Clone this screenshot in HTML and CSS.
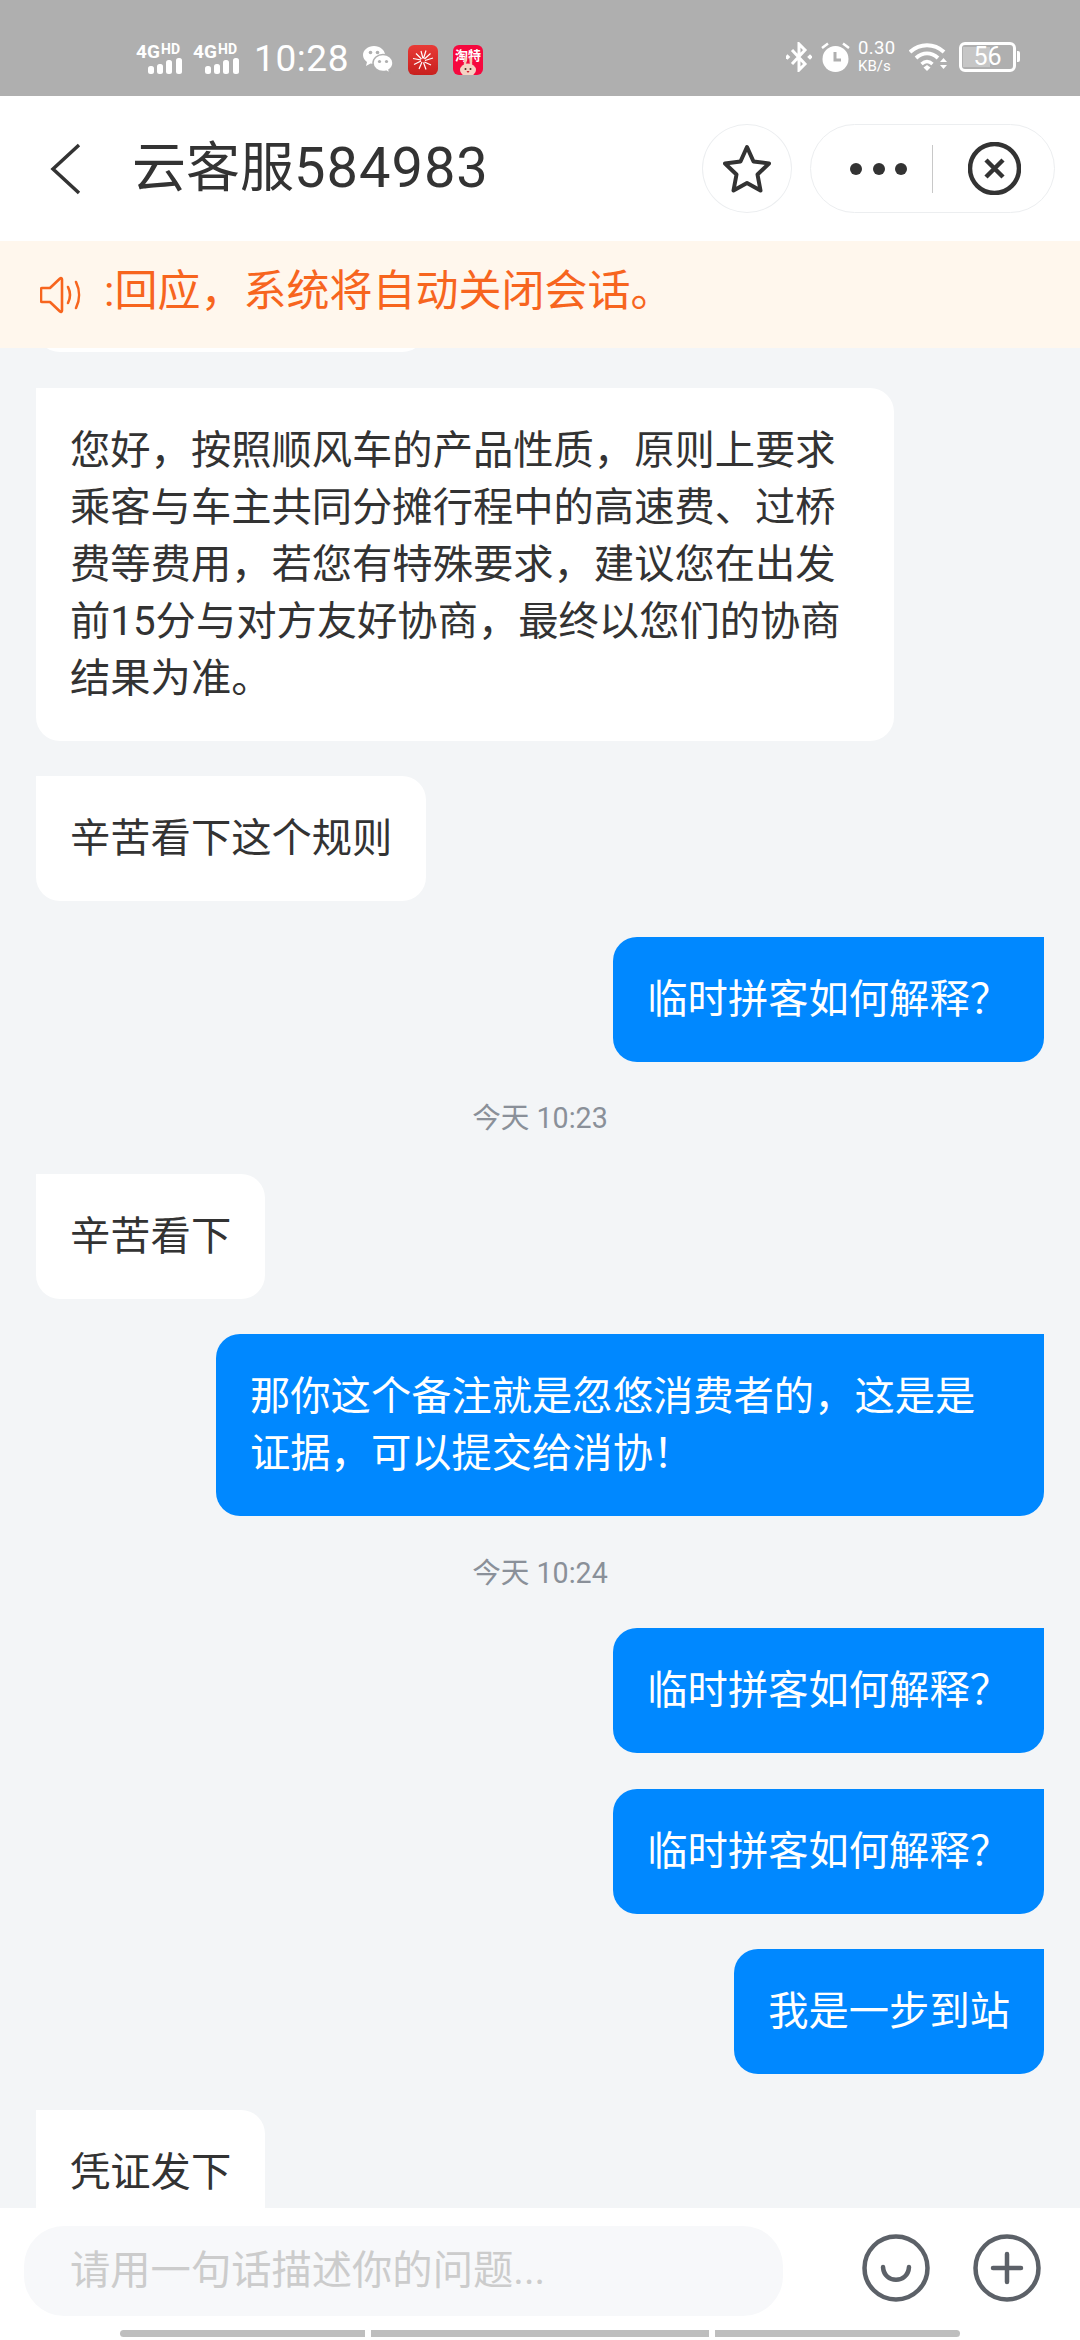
FILE: index.html
```html
<!DOCTYPE html>
<html lang="zh-CN">
<head>
<meta charset="utf-8">
<title>云客服584983</title>
<link rel="stylesheet" href="styles.css">
</head>
<body>
<div class="app">
  <div class="status">
    <svg class="sig" viewBox="0 -6 47 36"><text x="0" y="14" class="sig-g">4G</text><text x="25" y="10" class="sig-h">HD</text><rect x="12" y="22" width="6" height="8" rx="2.500"/><rect x="21" y="20" width="6" height="10" rx="2.500"/><rect x="30" y="16" width="6" height="14" rx="2.500"/><rect x="40" y="14" width="6" height="16" rx="2.500"/></svg>
    <svg class="sig sig2" viewBox="0 -6 47 36"><text x="0" y="14" class="sig-g">4G</text><text x="25" y="10" class="sig-h">HD</text><rect x="12" y="22" width="6" height="8" rx="2.500"/><rect x="21" y="20" width="6" height="10" rx="2.500"/><rect x="30" y="16" width="6" height="14" rx="2.500"/><rect x="40" y="14" width="6" height="16" rx="2.500"/></svg>
    <span class="clock">10:28</span>
    <svg class="ico wechat" viewBox="0 0 30 30"><path d="M11 1C5 1 0 5 0 10c0 3 1.600 5.300 4 7l-1 4 4.500-2.500c1 .3 2.300.5 3.500.5 C18 19 22 14 22 10 22 5 17 1 11 1z" fill="#fff"/><circle cx="7.500" cy="7.500" r="1.800" fill="#afafaf"/><circle cx="14.500" cy="7.500" r="1.800" fill="#afafaf"/><path d="M20 9.500c-5.500 0-10 3.800-10 8.500s4.500 8.500 10 8.500c1 0 2-.1 3-.4l4 2.400-1-3.600c2.500-1.600 4-4 4-6.900 0-4.700-4.500-8.500-10-8.500z" fill="#fff" stroke="#afafaf" stroke-width="1.500"/><circle cx="16.500" cy="16.500" r="1.600" fill="#afafaf"/><circle cx="23.500" cy="16.500" r="1.600" fill="#afafaf"/></svg>
    <svg class="ico app-red" viewBox="0 0 30 30"><defs><linearGradient id="rg" x1="0" y1="0" x2="0" y2="1"><stop offset="0" stop-color="#e83a36"/><stop offset="1" stop-color="#c8201e"/></linearGradient></defs><rect width="30" height="30" rx="6" fill="url(#rg)"/><path d="M15 13.500L13 6M15.500 13.500L18 5.500M16.500 14L22.500 8.500M17 15.500L25 13M16.500 17L23 20M15.500 17.500L18 24.500M14 17L11 24M13 16L6 19.500M13 15L5 13.500M13.500 14L8 8.500" stroke="#fff" stroke-width="1.200" fill="none"/></svg>
    <svg class="ico app-tao" viewBox="0 0 30 30"><rect width="30" height="30" rx="6" fill="#f6083e"/><text x="2" y="15" class="tao-t">淘特</text><path d="M12.500 13l-.5 6M17.500 13l.5 6" stroke="#f2c4b4" stroke-width="2.500" stroke-linecap="round"/><ellipse cx="15" cy="25" rx="8" ry="6.500" fill="#f4d3c4"/><circle cx="12.500" cy="24" r="1" fill="#432"/><circle cx="17.500" cy="24" r="1" fill="#432"/><path d="M13.500 26h3l-1.500 2z" fill="#c81e2e"/></svg>
    <div class="status-right">
      <svg class="ico bt" viewBox="0 0 26 30"><path d="M6 8l13 14-6 6V2l6 6L6 22" fill="none" stroke="#fff" stroke-width="3"/><rect x="-.5" y="13" width="4" height="4" transform="rotate(45 1.500 15)" fill="#fff"/><rect x="22" y="13" width="4" height="4" transform="rotate(45 24 15)" fill="#fff"/></svg>
      <svg class="ico alarm" viewBox="0 0 29 30"><circle cx="14.500" cy="17" r="13" fill="#fff"/><path d="M14 10v8h6" fill="none" stroke="#afafaf" stroke-width="3"/><path d="M1 6l6-4.500M28 6l-6-4.500" stroke="#fff" stroke-width="2.500"/></svg>
      <div class="speed"><span class="speed-num">0.30</span><span class="speed-unit">KB/s</span></div>
      <svg class="ico wifi" viewBox="0 0 39 30"><path d="M1 10C11 1 25 1 35 10" fill="none" stroke="#fff" stroke-width="4"/><path d="M7 16c7-6 15-6 22 0" fill="none" stroke="#fff" stroke-width="4"/><path d="M12.500 22c4-3.500 7-3.500 11 0" fill="none" stroke="#fff" stroke-width="3.500"/><path d="M14.500 25.500l3.500-2.500 3.500 2.500-3.500 3.500z" fill="#fff"/><path d="M31 20l3.500-4 3.500 4zM31 23h7l-3.500 4z" fill="#fff"/></svg>
      <div class="battery"><div class="battery-fill"></div><span class="battery-num">56</span></div>
      <div class="battery-nub"></div>
    </div>
  </div>

  <header class="head">
    <svg class="back" viewBox="0 0 31 52"><path d="M29 2L3 26l26 24" fill="none" stroke="#333" stroke-width="3.500"/></svg>
    <h1 class="title">云客服<span class="title-num">584983</span></h1>
    <div class="round-btn">
      <svg class="star" viewBox="0 0 48 50"><path d="M24 3l6.500 14.500 15.500 2-11.500 11 3 16L24 39l-13.500 7.500 3-16L2 19.500l15.500-2z" fill="none" stroke="#333" stroke-width="4" stroke-linejoin="round"/></svg>
    </div>
    <div class="capsule">
      <div class="dots"><span class="dot"></span><span class="dot"></span><span class="dot"></span></div>
      <div class="cap-sep"></div>
      <svg class="close" viewBox="0 0 53 53"><circle cx="26.500" cy="26.500" r="24.500" fill="none" stroke="#333" stroke-width="4.500"/><path d="M18 18l17 17M35 18L18 35" stroke="#333" stroke-width="4.500"/></svg>
    </div>
  </header>

  <div class="notice">
    <svg class="horn" viewBox="0 0 42 38"><path d="M2 12h8L20 2.500c1-.8 2-.3 2 1v31c0 1.300-1 1.800-2 1L10 26H2c-.6 0-1-.4-1-1V13c0-.6.4-1 1-1z" fill="none" stroke="#f7651e" stroke-width="2.600" stroke-linejoin="round"/><path d="M28 11c2.500 5 2.500 11 0 16M36 6c4 8 4 18 0 26" fill="none" stroke="#f7651e" stroke-width="2.600" stroke-linecap="round"/></svg>
    <div class="notice-text">:回应，系统将自动关闭会话。</div>
  </div>

  <main class="chat">
    <div class="bubble them stub"></div>
    <div class="bubble them">您好，按照顺风车的产品性质，原则上要求乘客与车主共同分摊行程中的高速费、过桥费等费用，若您有特殊要求，建议您在出发前15分与对方友好协商，最终以您们的协商结果为准。</div>
    <div class="bubble them">辛苦看下这个规则</div>
    <div class="bubble me">临时拼客如何解释<span class="fw">？</span></div>
    <div class="stamp">今天 10:23</div>
    <div class="bubble them">辛苦看下</div>
    <div class="bubble me">那你这个备注就是忽悠消费者的，这是是证据，可以提交给消协<span class="fw">！</span></div>
    <div class="stamp">今天 10:24</div>
    <div class="bubble me">临时拼客如何解释<span class="fw">？</span></div>
    <div class="bubble me">临时拼客如何解释<span class="fw">？</span></div>
    <div class="bubble me">我是一步到站</div>
    <div class="bubble them">凭证发下</div>
  </main>

  <footer class="foot">
    <div class="foot-row">
      <div class="input">请用一句话描述你的问题...</div>
      <svg class="tool tool-smile" viewBox="0 0 68 68"><circle cx="34" cy="34" r="31.500" fill="none" stroke="#5c6168" stroke-width="4.500"/><path d="M21 33c1 17 25 17 26 0" fill="none" stroke="#5c6168" stroke-width="4.500" stroke-linecap="round"/></svg>
      <svg class="tool tool-plus" viewBox="0 0 68 68"><circle cx="34" cy="34" r="31.500" fill="none" stroke="#5c6168" stroke-width="4.500"/><path d="M20 34h28M34 20v28" fill="none" stroke="#5c6168" stroke-width="4.500" stroke-linecap="round"/></svg>
    </div>
    <div class="home">
      <span class="home-bar home-a"></span><span class="home-bar home-b"></span><span class="home-bar home-c"></span>
    </div>
  </footer>
</div>
</body>
</html>
```
FILE: styles.css
```css
* { box-sizing: border-box; }
html, body { margin: 0; padding: 0; }
body {
  width: 1080px;
  height: 2340px;
  overflow: hidden;
  font-family: Roboto, "Noto Sans CJK SC", sans-serif;
  color: #333;
  background: #f3f5f7;
}
.app { display: flex; flex-direction: column; height: 2340px; }

/* status bar */
.status {
  flex: none;
  height: 96px;
  background: #afafaf;
  display: flex;
  align-items: flex-end;
  padding: 0 60px 21px 136px;
  color: #fff;
}
.sig { width: 47px; height: 36px; fill: #fff; flex: none; margin-bottom: 1px; overflow: visible; }
.sig2 { margin-left: 10px; }
.sig-g { font: 700 19px Roboto, sans-serif; }
.sig-h { font: 700 14px Roboto, sans-serif; }
.clock { margin-left: 14px; font-size: 37px; letter-spacing: .6px; line-height: 36px; margin-bottom: -2px; width: 95px; flex: none; white-space: nowrap; }
.ico { flex: none; height: 30px; display: block; }
.wechat { width: 30px; margin-left: 14px; }
.app-red { width: 30px; margin-left: 15px; }
.app-tao { width: 30px; margin-left: 15px; }
.tao-t { font: 700 13px "Noto Sans CJK SC", sans-serif; fill: #fff; }
.status-right { margin-left: auto; display: flex; align-items: center; }
.bt { width: 26px; }
.alarm { width: 29px; margin-left: 9px; }
.speed { margin: 2px 0 0 8px; width: 38px; display: flex; flex-direction: column; color: #fff; }
.speed-num { font-size: 18.500px; line-height: 17.500px; letter-spacing: .4px; }
.speed-unit { font-size: 15px; line-height: 17.500px; }
.wifi { width: 39px; margin-left: 13px; }
.battery {
  margin-left: 11px;
  width: 57px;
  height: 30px;
  border: 3px solid #fff;
  border-radius: 6px;
  display: flex;
  align-items: center;
  justify-content: center;
  position: relative;
}
.battery-fill { position: absolute; left: 1px; top: 2px; bottom: 2px; width: 27px; background: #c6c6c6; }
.battery-num { position: relative; font-size: 25px; line-height: 24px; color: #fff; }
.battery-nub { width: 3px; height: 11px; margin-left: 1px; background: #fff; border-radius: 0 2px 2px 0; }

/* header */
.head {
  flex: none;
  height: 145px;
  background: #fff;
  display: flex;
  align-items: center;
  padding: 0 25px 0 50px;
}
.back { width: 31px; height: 52px; flex: none; }
.title {
  margin: 0 0 0 51px;
  font-size: 54px;
  font-weight: 400;
  line-height: 60px;
  flex: 1;
  color: #333;
}
.title-num { font-size: 56px; letter-spacing: 1px; line-height: 0; }
.round-btn {
  width: 90px;
  height: 89px;
  border: 1px solid #eceef0;
  border-radius: 50%;
  display: flex;
  align-items: center;
  justify-content: center;
  flex: none;
}
.star { width: 48px; height: 50px; }
.capsule {
  margin-left: 18px;
  width: 245px;
  height: 89px;
  border: 1px solid #eceef0;
  border-radius: 45px;
  display: flex;
  align-items: center;
  padding-left: 39px;
  flex: none;
}
.dots { display: flex; gap: 10.500px; }
.dot { width: 12px; height: 12px; border-radius: 50%; background: #333; }
.cap-sep { width: 1px; height: 48px; background: #c8c8c8; margin-left: 25px; }
.close { width: 53px; height: 53px; margin-left: 35px; }

/* notice */
.notice {
  flex: none;
  height: 107px;
  background: #fff7ed;
  display: flex;
  align-items: center;
  padding-left: 40px;
}
.horn { width: 42px; height: 38px; flex: none; }
.notice-text {
  margin-left: 22px;
  font-size: 43px;
  line-height: 50px;
  color: #f7651e;
  white-space: nowrap;
  margin-top: -8px;
}

/* chat */
.chat {
  flex: 1;
  min-height: 0;
  overflow: hidden;
  display: flex;
  flex-direction: column;
  gap: 35.500px;
  padding: 0 36px;
  align-items: flex-start;
}
.bubble {
  flex: none;
  padding: 34px;
  font-size: 40.300px;
  line-height: 57px;
  border-radius: 24px;
}
.fw { font-family: "Noto Sans CJK TC", sans-serif; line-height: 0; }
.them {
  align-self: flex-start;
  background: #fff;
  color: #333;
  max-width: 858px;
  border-top-left-radius: 0;
}
.me {
  align-self: flex-end;
  background: #0088ff;
  color: #fff;
  max-width: 828px;
  border-top-right-radius: 0;
}
.stub { width: 390px; height: 64px; margin-top: -60px; padding: 0; }
.stamp {
  flex: none;
  align-self: center;
  font-size: 28.600px;
  line-height: 40px;
  color: #8a9099;
  margin-top: 1px;
}

/* footer */
.foot {
  flex: none;
  height: 132px;
  background: #fff;
  padding-top: 18px;
}
.foot-row { display: flex; align-items: flex-start; padding-left: 24px; }
.input {
  width: 759px;
  height: 90px;
  border-radius: 40px;
  background: #f7f8fa;
  padding-left: 46px;
  font-size: 40.300px;
  line-height: 90px;
  color: #ccc;
}
.tool { width: 68px; height: 68px; flex: none; margin-top: 8px; }
.tool-smile { margin-left: 79px; }
.tool-plus { margin-left: 43px; }
.home { display: flex; gap: 6px; padding-left: 120px; margin-top: 14px; }
.home-bar { height: 7px; background: #bebebe; display: block; }
.home-a { width: 245px; border-radius: 4px 0 0 4px; }
.home-b { width: 338px; }
.home-c { width: 245px; border-radius: 0 4px 4px 0; }
```
